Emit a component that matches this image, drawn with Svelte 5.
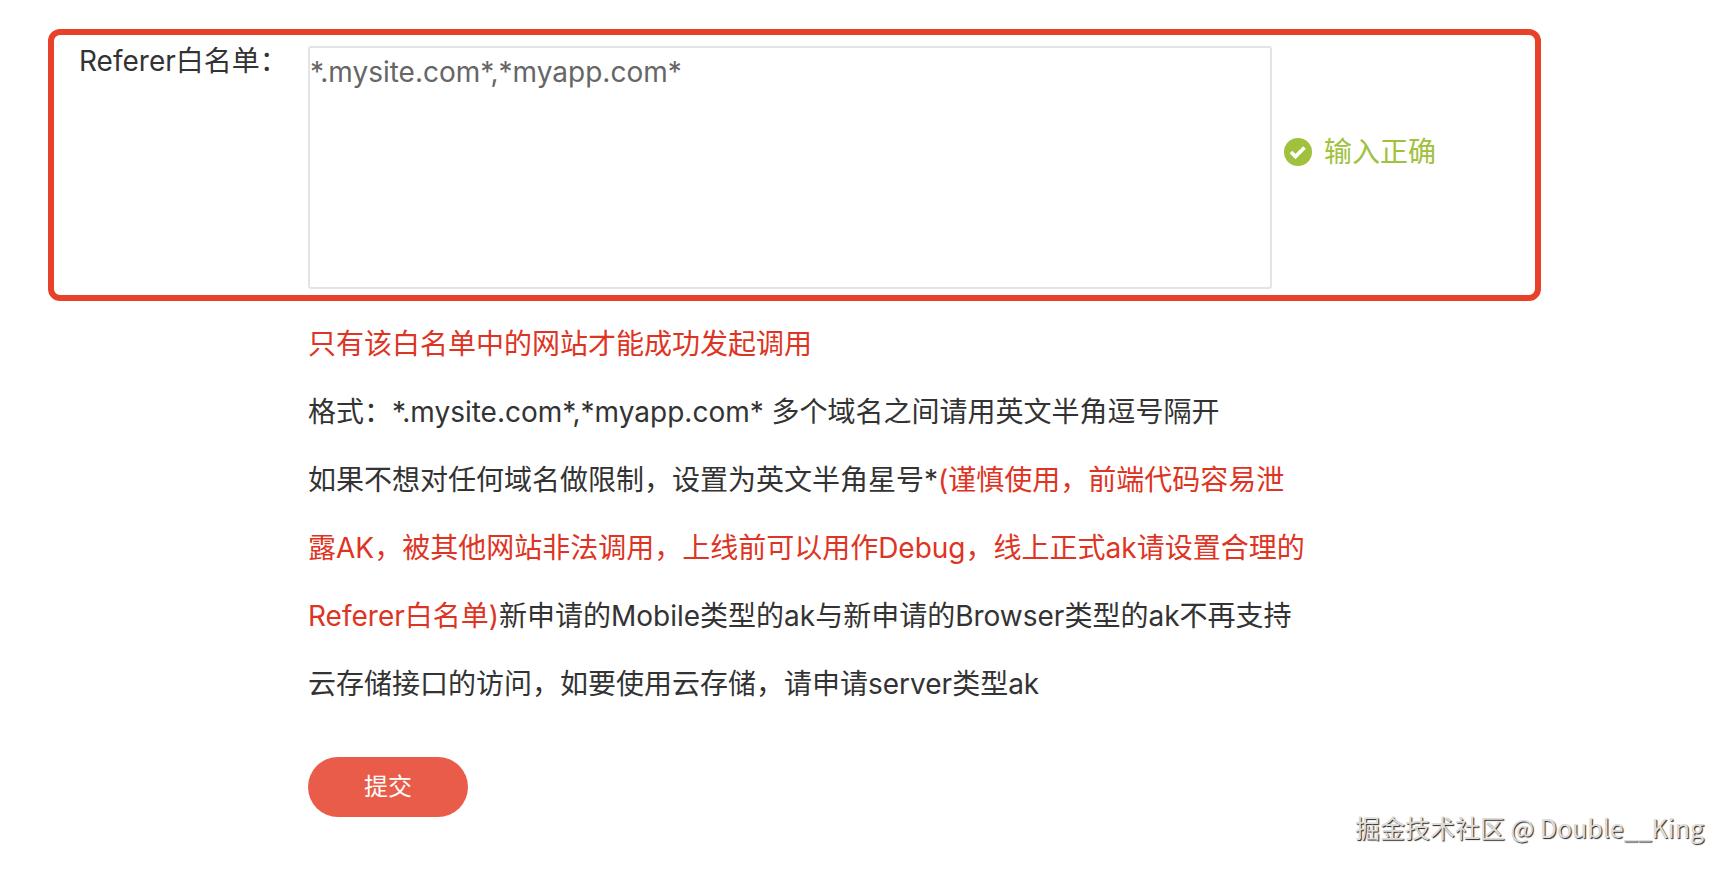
<script>
  let referers = $state('*.mysite.com*,*myapp.com*');
</script>

<form class="page" onsubmit={(e) => e.preventDefault()}>
  <section class="field">
    <label for="referers">Referer白名单：</label>
    <textarea id="referers" bind:value={referers} spellcheck="false"></textarea>
    <p class="status">
      <svg viewBox="0 0 30 30" width="30" height="30" aria-hidden="true">
        <circle cx="15" cy="15" r="14" fill="#9fc13c" />
        <path d="M8 15l4.5 4.5 9-9" fill="none" stroke="#fff" stroke-width="3.8" />
      </svg>
      <span>输入正确</span>
    </p>
  </section>

  <div class="notes">
    <p class="warn">只有该白名单中的网站才能成功发起调用</p>
    <p>格式：*.mysite.com*,*myapp.com* 多个域名之间请用英文半角逗号隔开</p>
    <p>
      如果不想对任何域名做限制，设置为英文半角星号*<span class="warn">(谨慎使用，前端代码容易泄露AK，被其他网站非法调用，上线前可以用作Debug，线上正式ak请设置合理的Referer白名单)</span>新申请的Mobile类型的ak与新申请的Browser类型的ak不再支持云存储接口的访问，如要使用云存储，请申请server类型ak
    </p>
    <button type="submit">提交</button>
  </div>

  <footer>掘金技术社区 @ Double__King</footer>
</form>

<style>
  :global(body) {
    margin: 0;
    background: #fff;
  }
  .page {
    box-sizing: border-box;
    padding: 29px 22px 20px 48px;
    color: #333;
    font: 28px/68px Inter, "Noto Sans CJK SC", sans-serif;
  }
  p {
    margin: 0;
  }
  .field {
    box-sizing: border-box;
    display: flex;
    max-width: 1493px;
    padding: 11px 20px 6px 25px;
    border: 6px solid #e8412a;
    border-radius: 12px;
  }
  label {
    flex: 0 0 229px;
    line-height: 30px;
  }
  textarea {
    box-sizing: border-box;
    flex: 0 1 964px;
    min-width: 0;
    height: 243px;
    padding: 4px 0;
    border: 2px solid #e4e4e4;
    border-radius: 3px;
    outline: 0;
    resize: none;
    color: #666;
    background: #fff;
    font: inherit;
    line-height: 40px;
  }
  .status {
    display: flex;
    align-items: center;
    align-self: flex-start;
    gap: 11px;
    padding: 72px 0 0 11px;
    color: #9fc13c;
    white-space: nowrap;
  }
  .notes {
    max-width: 1000px;
    padding: 9px 0 0 260px;
  }
  .warn {
    color: #de3423;
  }
  button {
    display: block;
    width: 160px;
    height: 60px;
    margin-top: 39px;
    padding: 0;
    border: 0;
    border-radius: 30px;
    color: #fff;
    background: #ea5c4a;
    font: 24px/58px Inter, "Noto Sans CJK SC", sans-serif;
  }
  footer {
    padding-right: 2px;
    color: #ddd;
    font: 25px/20px "Noto Sans CJK SC", sans-serif;
    text-align: right;
    text-shadow: 1px 1px 1px #222;
  }
</style>
